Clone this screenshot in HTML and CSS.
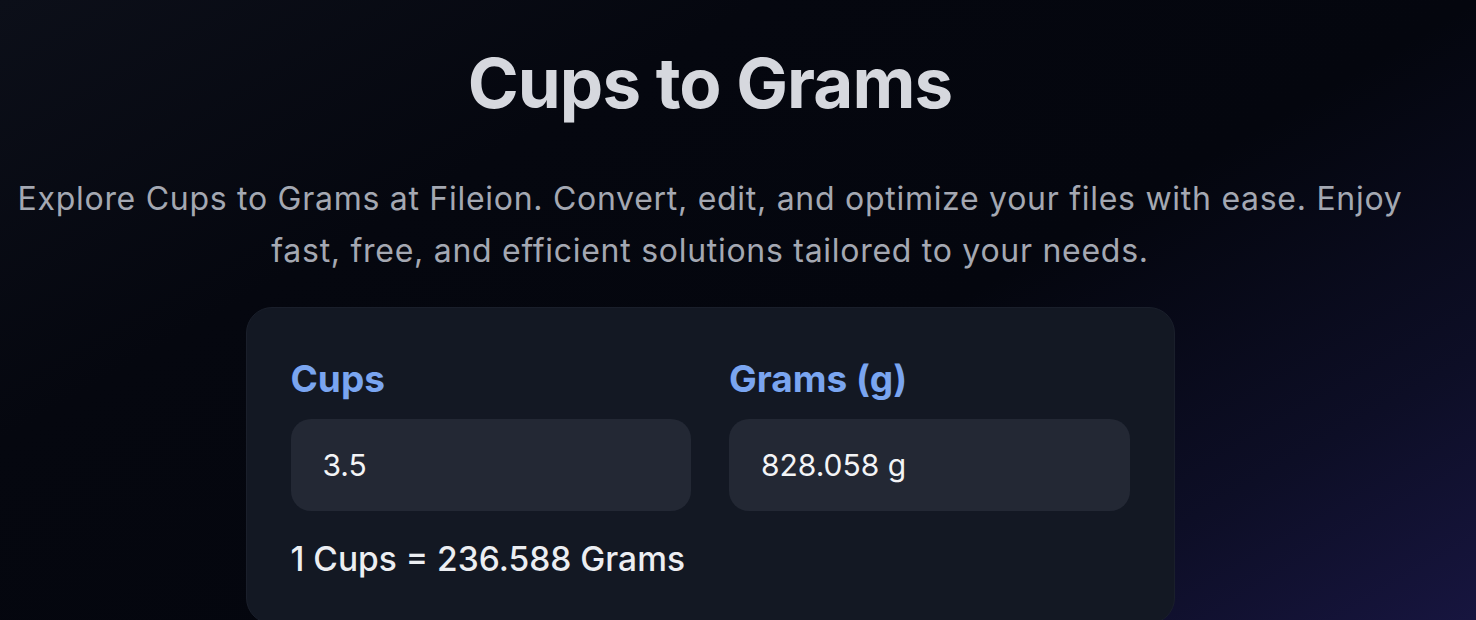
FILE: index.html
```html
<!DOCTYPE html>
<html lang="en">
<head>
<meta charset="utf-8">
<title>Cups to Grams</title>
<link rel="stylesheet" href="styles.css">
</head>
<body>
<main class="page">
  <section class="content">
    <h1 class="title">Cups to Grams</h1>
    <p class="lead">Explore Cups to Grams at Fileion. Convert, edit, and optimize your files with ease. Enjoy fast, free, and efficient solutions tailored to your needs.</p>
    <div class="card">
      <div class="fields">
        <div class="field">
          <label class="label" for="cups">Cups</label>
          <div class="input" id="cups">3.5</div>
        </div>
        <div class="field">
          <label class="label" for="grams">Grams (g)</label>
          <div class="input" id="grams">828.058 g</div>
        </div>
      </div>
      <p class="ratio">1 Cups = 236.588 Grams</p>
    </div>
  </section>
</main>
</body>
</html>
```
FILE: styles.css
```css
* { box-sizing: border-box; }
html, body { margin: 0; padding: 0; height: 100%; }
body {
  font-family: Inter, "Noto Sans", "Liberation Sans", sans-serif;
  background: linear-gradient(150deg, #0c0f19 0%, #05070f 30%, #04060e 58%, #0d0e26 82%, #17153f 100%);
  overflow: hidden;
}
.page {
  width: 1420px;
  min-height: 620px;
}
.content {
  display: flex;
  flex-direction: column;
  align-items: center;
  padding-top: 38px;
}
.title {
  margin: 0;
  font-size: 69px;
  font-weight: 700;
  line-height: 90px;
  letter-spacing: -0.9px;
  color: #d6d8de;
}
.lead {
  margin: 45px 0 0;
  font-size: 32px;
  line-height: 52px;
  letter-spacing: 0.72px;
  color: #a4a8b2;
  text-align: center;
  max-width: 1400px;
}
.card {
  margin-top: 30px;
  width: 929px;
  background: #131823;
  border: 1px solid #1a1f2b;
  border-radius: 26px;
  padding: 44px 44px 40px;
}
.fields {
  display: grid;
  grid-template-columns: 1fr 1fr;
  column-gap: 38px;
}
.field { display: flex; flex-direction: column; }
.label {
  font-size: 37px;
  font-weight: 700;
  line-height: 54px;
  color: #7aa5f0;
  margin-bottom: 13px;
}
.input {
  height: 92px;
  background: #232834;
  border-radius: 20px;
  padding: 0 32px;
  display: flex;
  align-items: center;
  font-size: 30px;
  color: #f3f4f6;
}
.ratio {
  margin: 24px 0 0;
  font-size: 33.5px;
  font-weight: 500;
  line-height: 48px;
  color: #eceef2;
}
```
